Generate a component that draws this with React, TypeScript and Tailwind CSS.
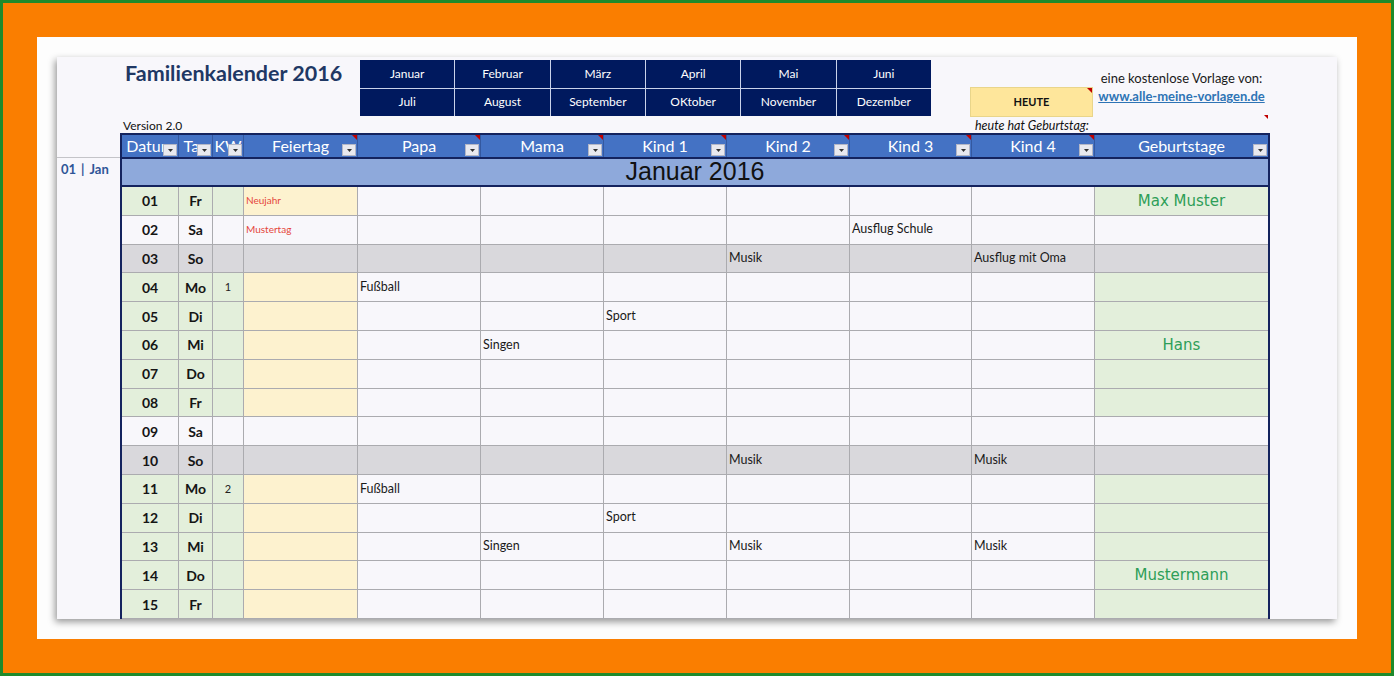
import React from "react";

type Col = { key: string; w: string; label: string; comment: boolean };

const cols: Col[] = [
  { key: "datum", w: "w-[56px]", label: "Datum", comment: false },
  { key: "tag", w: "w-[34px]", label: "Tag", comment: false },
  { key: "kw", w: "w-[31px]", label: "KW", comment: false },
  { key: "feiertag", w: "w-[114px]", label: "Feiertag", comment: true },
  { key: "papa", w: "w-[123px]", label: "Papa", comment: true },
  { key: "mama", w: "w-[123px]", label: "Mama", comment: true },
  { key: "k1", w: "w-[123px]", label: "Kind 1", comment: true },
  { key: "k2", w: "w-[123px]", label: "Kind 2", comment: true },
  { key: "k3", w: "w-[122px]", label: "Kind 3", comment: true },
  { key: "k4", w: "w-[123px]", label: "Kind 4", comment: true },
  { key: "geb", w: "w-[174px]", label: "Geburtstage", comment: false },
];

type Row = {
  d: string;
  t: string;
  kw?: string;
  feiertag?: string;
  papa?: string;
  mama?: string;
  k1?: string;
  k2?: string;
  k3?: string;
  k4?: string;
  geb?: string;
};

const rows: Row[] = [
  { d: "01", t: "Fr", feiertag: "Neujahr", geb: "Max Muster" },
  { d: "02", t: "Sa", feiertag: "Mustertag", k3: "Ausflug Schule" },
  { d: "03", t: "So", k2: "Musik", k4: "Ausflug mit Oma" },
  { d: "04", t: "Mo", kw: "1", papa: "Fußball" },
  { d: "05", t: "Di", k1: "Sport" },
  { d: "06", t: "Mi", mama: "Singen", geb: "Hans" },
  { d: "07", t: "Do" },
  { d: "08", t: "Fr" },
  { d: "09", t: "Sa" },
  { d: "10", t: "So", k2: "Musik", k4: "Musik" },
  { d: "11", t: "Mo", kw: "2", papa: "Fußball" },
  { d: "12", t: "Di", k1: "Sport" },
  { d: "13", t: "Mi", mama: "Singen", k2: "Musik", k4: "Musik" },
  { d: "14", t: "Do", geb: "Mustermann" },
  { d: "15", t: "Fr" },
];

const months = [
  "Januar",
  "Februar",
  "März",
  "April",
  "Mai",
  "Juni",
  "Juli",
  "August",
  "September",
  "OKtober",
  "November",
  "Dezember",
];

const font = { fontFamily: "Lato, 'Noto Sans', sans-serif" };

function Dropdown() {
  return (
    <div className="absolute right-[1px] bottom-[1px] w-[14px] h-[12px] bg-[#E9E9EF] border border-[#B4B7C6] flex items-center justify-center">
      <svg width="5" height="3" viewBox="0 0 5 3">
        <path d="M0 0 L5 0 L2.5 3 Z" fill="#333" />
      </svg>
    </div>
  );
}

function Comment() {
  return (
    <div className="absolute top-0 right-0 w-0 h-0 border-l-[5px] border-l-transparent border-t-[5px] border-t-[#C00000]" />
  );
}

function cellBg(key: string, t: string) {
  if (t === "So") return "bg-[#D9D8DC]";
  if (t === "Sa") return "bg-[#F8F7FB]";
  if (key === "datum" || key === "tag" || key === "kw" || key === "geb") return "bg-[#E3EFDB]";
  if (key === "feiertag") return "bg-[#FDF2CF]";
  return "bg-[#F8F7FB]";
}

function CellContent({ k, r }: { k: string; r: Row }) {
  if (k === "datum")
    return <span className="w-full text-center text-[14px] font-bold text-[#151515]">{r.d}</span>;
  if (k === "tag")
    return <span className="w-full text-center text-[14px] font-bold text-[#151515]">{r.t}</span>;
  if (k === "kw")
    return <span className="w-full text-center text-[11px] text-[#222]">{r.kw ?? ""}</span>;
  if (k === "feiertag")
    return <span className="pl-[2px] text-[10px] text-[#E5463C]">{r.feiertag ?? ""}</span>;
  if (k === "geb")
    return (
      <span
        className="w-full text-center text-[15px] text-[#2E9E58]"
        style={{ fontFamily: "'DejaVu Sans', sans-serif" }}
      >
        {r.geb ?? ""}
      </span>
    );
  const v = (r as Record<string, string | undefined>)[k];
  return <span className="pl-[2px] text-[12.5px] text-[#1A1A1A]">{v ?? ""}</span>;
}

export default function App() {
  return (
    <div className="w-[1394px] h-[676px] bg-[#1F8A2B] p-[3px]" style={font}>
      <div className="w-full h-full bg-[#FA7E00] p-[34px]">
        <div className="w-full h-full bg-[#FDFDFD] p-[20px]">
          <div className="w-[1280px] h-[562px] bg-[#F8F7FB] shadow-[-2px_3px_7px_rgba(0,0,0,0.4)] overflow-hidden flex">
            {/* gutter */}
            <div className="w-[63px] shrink-0 flex flex-col">
              <div className="h-[101px] border-b border-[#C4C4C8]" />
              <div className="pl-[4px] pt-[2px] flex text-[13px] font-bold text-[#2F5597] whitespace-nowrap">
                <span>01</span>
                <span className="mx-[5px]">|</span>
                <span>Jan</span>
              </div>
            </div>

            {/* main */}
            <div className="w-[1150px] shrink-0 flex flex-col">
              {/* top area */}
              <div className="h-[77px] flex">
                <div className="w-[240px] flex flex-col justify-between">
                  <div className="pl-[5px] pt-[3px] text-[21.5px] font-bold text-[#1F3864] leading-[26px] whitespace-nowrap">
                    Familienkalender 2016
                  </div>
                  <div className="pl-[3px] text-[12px] text-[#111] leading-[14px]">Version 2.0</div>
                </div>
                <div className="w-[571px] mt-[3px] h-[56px] bg-[#C9D2EA] grid grid-cols-6 gap-[1px]">
                  {months.map((m) => (
                    <div
                      key={m}
                      className="bg-[#00195E] flex items-center justify-center text-[12px] text-white"
                    >
                      {m}
                    </div>
                  ))}
                </div>
                <div className="w-[39px]" />
                <div className="w-[123px] flex flex-col">
                  <div className="h-[30px]" />
                  <div className="relative h-[30px] bg-[#FEE69B] border border-[#E9D58A] flex items-center justify-center text-[11px] font-bold text-[#111]">
                    HEUTE
                    <Comment />
                  </div>
                  <div className="pl-[5px] pt-[2px] text-[12.5px] italic text-[#111] leading-[14px] whitespace-nowrap">
                    heute hat Geburtstag:
                  </div>
                </div>
                <div className="relative flex-1 flex flex-col items-center pt-[13px]">
                  <div className="text-[13px] text-[#1A1A1A] leading-[17px] whitespace-nowrap">
                    eine kostenlose Vorlage von:
                  </div>
                  <div className="pt-[1px] text-[13px] font-bold text-[#2E74B5] underline leading-[17px] whitespace-nowrap">
                    www.alle-meine-vorlagen.de
                  </div>
                  <div className="absolute right-[2px] bottom-[14px] w-0 h-0 border-l-[4px] border-l-transparent border-t-[4px] border-t-[#C00000]" />
                </div>
              </div>

              {/* table */}
              <div className="flex flex-col border-x-2 border-t-2 border-[#14235E]">
                {/* header */}
                <div className="flex h-[24px] bg-[#4472C4] border-b-2 border-[#14235E]">
                  {cols.map((c, i) => (
                    <div
                      key={c.key}
                      className={`${c.w} shrink-0 relative overflow-hidden flex items-center justify-center text-[16px] text-white whitespace-nowrap ${
                        i > 0 ? "border-l border-[#34589F]" : ""
                      }`}
                    >
                      {c.label}
                      <Dropdown />
                      {c.comment && <Comment />}
                    </div>
                  ))}
                </div>
                {/* month band */}
                <div
                  className="h-[28px] bg-[#8EA9DB] border-b-2 border-[#14235E] flex items-center justify-center text-[25px] text-[#111]"
                  style={{ fontFamily: "'Liberation Sans', Arial, sans-serif" }}
                >
                  Januar 2016
                </div>
                {/* rows */}
                {rows.map((r) => (
                  <div key={r.d} className="flex h-[28.8px] border-b border-[#ABABAF]">
                    {cols.map((c, i) => (
                      <div
                        key={c.key}
                        className={`${c.w} shrink-0 flex items-center overflow-hidden whitespace-nowrap ${cellBg(
                          c.key,
                          r.t
                        )} ${i > 0 ? "border-l border-[#ABABAF]" : ""}`}
                      >
                        <CellContent k={c.key} r={r} />
                      </div>
                    ))}
                  </div>
                ))}
              </div>
            </div>
          </div>
        </div>
      </div>
    </div>
  );
}
